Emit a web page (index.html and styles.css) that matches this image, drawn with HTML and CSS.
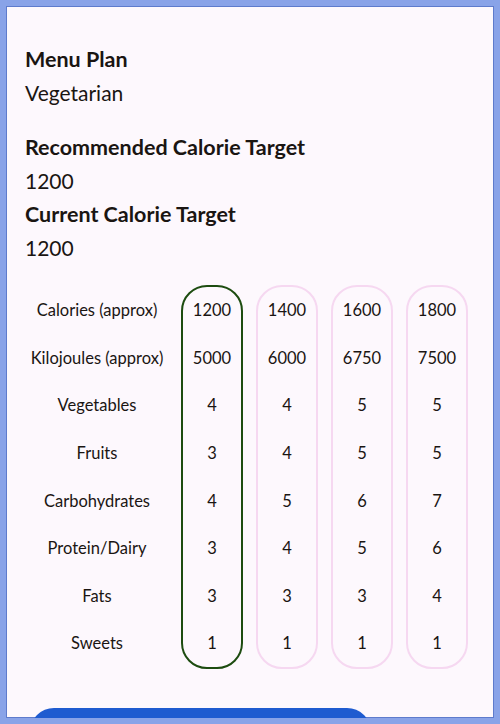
FILE: index.html
```html
<!DOCTYPE html>
<html>
<head>
<meta charset="utf-8">
<link rel="stylesheet" href="styles.css">
</head>
<body>
<div class="frame">
  <div class="content">
    <section class="group">
      <h2 class="label">Menu Plan</h2>
      <p class="value">Vegetarian</p>
    </section>
    <section class="group second">
      <h2 class="label">Recommended Calorie Target</h2>
      <p class="value">1200</p>
      <h2 class="label">Current Calorie Target</h2>
      <p class="value">1200</p>
    </section>
    <div class="table">
      <div class="col names">
        <div class="cell">Calories (approx)</div>
        <div class="cell">Kilojoules (approx)</div>
        <div class="cell">Vegetables</div>
        <div class="cell">Fruits</div>
        <div class="cell">Carbohydrates</div>
        <div class="cell">Protein/Dairy</div>
        <div class="cell">Fats</div>
        <div class="cell">Sweets</div>
      </div>
      <div class="col pill selected">
        <div class="cell">1200</div><div class="cell">5000</div><div class="cell">4</div><div class="cell">3</div>
        <div class="cell">4</div><div class="cell">3</div><div class="cell">3</div><div class="cell">1</div>
      </div>
      <div class="col pill">
        <div class="cell">1400</div><div class="cell">6000</div><div class="cell">4</div><div class="cell">4</div>
        <div class="cell">5</div><div class="cell">4</div><div class="cell">3</div><div class="cell">1</div>
      </div>
      <div class="col pill">
        <div class="cell">1600</div><div class="cell">6750</div><div class="cell">5</div><div class="cell">5</div>
        <div class="cell">6</div><div class="cell">5</div><div class="cell">3</div><div class="cell">1</div>
      </div>
      <div class="col pill">
        <div class="cell">1800</div><div class="cell">7500</div><div class="cell">5</div><div class="cell">5</div>
        <div class="cell">7</div><div class="cell">6</div><div class="cell">4</div><div class="cell">1</div>
      </div>
    </div>
    <div class="button-row">
      <button class="save" aria-label="Save"></button>
    </div>
  </div>
</div>
</body>
</html>
```
FILE: styles.css
```css
html, body {
  margin: 0;
  padding: 0;
}
body {
  width: 500px;
  height: 724px;
  font-family: "Lato", "Noto Sans", sans-serif;
  color: #1a1512;
}
.frame {
  width: 500px;
  height: 724px;
  box-sizing: border-box;
  border: 6px solid #89a3e8;
  box-shadow: inset 0 0 0 1px #5e7bcc;
  background: #fdf8fd;
  overflow: hidden;
}
.content {
  height: 100%;
  overflow: hidden;
  padding: 36px 19px 0 19px;
  box-sizing: border-box;
}
.group {
  display: flex;
  flex-direction: column;
}
.second {
  margin-top: 20px;
}
.label {
  margin: 0;
  font-size: 21.5px;
  font-weight: 700;
  line-height: 34px;
}
.value {
  margin: 0;
  font-size: 21px;
  font-weight: 400;
  line-height: 33.5px;
}
.table {
  margin-top: 20px;
  display: flex;
  gap: 13px;
  font-size: 16.5px;
}
.col {
  display: flex;
  flex-direction: column;
}
.names {
  width: 144px;
  margin-right: -1px;
  padding-top: 2px;
}
.pill {
  width: 58px;
  border: 2px solid #f6d8f1;
  border-radius: 26px;
}
.pill.selected {
  border-color: #1d4c10;
}
.cell {
  height: 47.6px;
  display: flex;
  align-items: center;
  justify-content: center;
  white-space: nowrap;
}
.button-row {
  margin-top: 39px;
  padding-left: 5px;
}
.save {
  display: block;
  width: 341px;
  height: 60px;
  border: none;
  border-radius: 24px;
  background: #1e5bd0;
}
```
